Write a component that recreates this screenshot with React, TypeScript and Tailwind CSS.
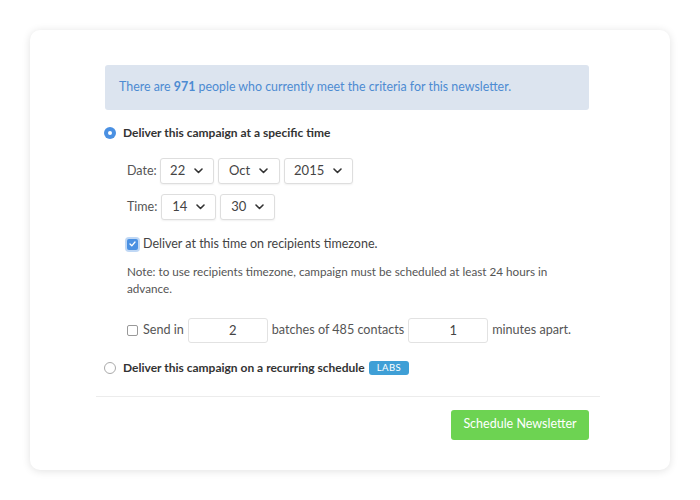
import * as React from "react"

const Chevron = () => (
  <svg width="9" height="6" viewBox="0 0 9 6" className="ml-[9px]">
    <path d="M1 1l3.5 3.5L8 1" fill="none" stroke="#333" strokeWidth="1.6" strokeLinecap="round" strokeLinejoin="round" />
  </svg>
)

const Select = ({ value, width }: { value: string; width: string }) => (
  <div
    className={`flex h-[26px] items-center justify-center rounded-[3px] border border-[#dedede] bg-white text-[13px] text-[#444] shadow-[0_1px_2px_rgba(0,0,0,0.06)] ${width}`}
  >
    {value}
    <Chevron />
  </div>
)

export default function App() {
  return (
    <div className="h-[500px] w-[700px] bg-white p-[30px] font-['Lato',sans-serif]">
      <div className="h-[440px] w-[640px] rounded-[10px] bg-white pt-[35px] shadow-[0_1px_8px_rgba(0,0,0,0.12)]">
        <div className="ml-[75px] mr-[81px] flex h-[45px] items-center rounded-[3px] bg-[#dce4ef] px-[14px] text-[12.4px] text-[#4d8bd2]">
          There are&nbsp;<b className="font-bold">971</b>&nbsp;people who currently meet the criteria for this newsletter.
        </div>

        <div className="ml-[74px] mt-[16px] flex h-[14px] items-center text-[12px] font-bold text-[#333]">
          <span className="mr-[7px] flex h-[12px] w-[12px] items-center justify-center rounded-full bg-[#4a90e2]">
            <span className="h-[4px] w-[4px] rounded-full bg-white" />
          </span>
          Deliver this campaign at a specific time
        </div>

        <div className="ml-[97px] mt-[18px] flex flex-col gap-[10px] text-[12.5px] text-[#555]">
          <div className="flex items-center gap-[4px]">
            <span className="mr-[-1px]">Date:</span>
            <Select value="22" width="w-[54px]" />
            <Select value="Oct" width="w-[62px]" />
            <Select value="2015" width="w-[69px]" />
          </div>
          <div className="flex items-center gap-[4px]">
            <span>Time:</span>
            <Select value="14" width="w-[55px]" />
            <Select value="30" width="w-[55px]" />
          </div>
        </div>

        <div className="ml-[97px] mt-[15px] flex items-center text-[12.5px] text-[#444]">
          <span className="mr-[5px] flex h-[11px] w-[11px] items-center justify-center rounded-[2px] bg-[#4a90e2] shadow-[0_0_0_2px_rgba(74,144,226,0.35)]">
            <svg width="7" height="6" viewBox="0 0 7 6">
              <path d="M1 3l1.8 1.8L6 1" fill="none" stroke="#fff" strokeWidth="1.3" strokeLinecap="round" strokeLinejoin="round" />
            </svg>
          </span>
          Deliver at this time on recipients timezone.
        </div>

        <p className="ml-[97px] mt-[9px] w-[440px] text-[11.7px] leading-[17px] text-[#555]">
          Note: to use recipients timezone, campaign must be scheduled at least 24 hours in advance.
        </p>

        <div className="ml-[97px] mt-[21px] flex items-center text-[12.6px] text-[#555]">
          <span className="mr-[5px] h-[11px] w-[11px] rounded-[2px] border border-[#999] bg-white" />
          <span>Send in</span>
          <div className="mx-[4px] flex h-[25px] w-[80px] items-center justify-center rounded-[3px] border border-[#e2e2e2] bg-white pl-[10px] text-[13px] text-[#444]">
            2
          </div>
          <span>batches of 485 contacts</span>
          <div className="mx-[4px] flex h-[25px] w-[80px] items-center justify-center rounded-[3px] border border-[#e2e2e2] bg-white pl-[10px] text-[13px] text-[#444]">
            1
          </div>
          <span>minutes apart.</span>
        </div>

        <div className="ml-[74px] mt-[18px] flex h-[14px] items-center text-[12px] font-bold text-[#333]">
          <span className="mr-[7px] h-[12px] w-[12px] rounded-full border border-[#aaa] bg-white" />
          Deliver this campaign on a recurring schedule
          <span className="ml-[4px] flex h-[14px] items-center rounded-[3px] bg-[#3f9fd6] px-[8px] text-[9.5px] font-normal tracking-[0.5px] text-white">
            LABS
          </span>
        </div>

        <div className="ml-[66px] mr-[70px] mt-[21px] h-px bg-[#ececec]" />

        <div className="mr-[81px] mt-[13px] flex justify-end">
          <button className="h-[30px] w-[138px] rounded-[3px] bg-[#6dd352] text-[12.5px] text-white">
            Schedule Newsletter
          </button>
        </div>
      </div>
    </div>
  )
}
